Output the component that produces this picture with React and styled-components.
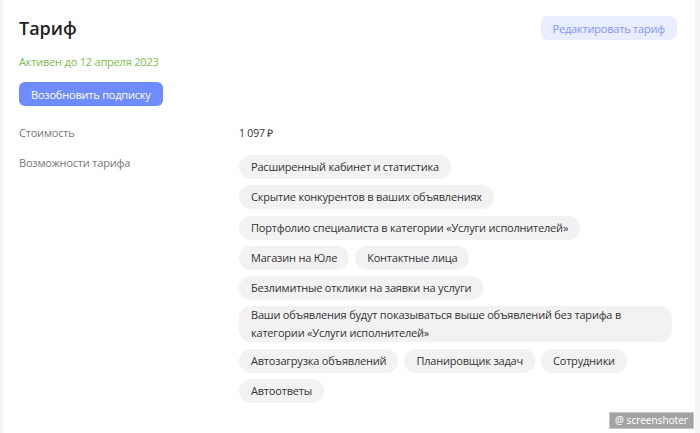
import React from 'react'
import styled, { createGlobalStyle } from 'styled-components'

const GlobalStyle = createGlobalStyle`
  html, body {
    margin: 0;
    padding: 0;
    background: #f4f4f6;
    font-family: "Open Sans", "Liberation Sans", sans-serif;
  }
`

const Page = styled.div`
  display: flex;
  width: 700px;
  height: 433px;
  padding-left: 3px;
  padding-right: 5px;
  box-sizing: border-box;
  position: relative;
  overflow: hidden;
`

const Card = styled.div`
  flex: 1;
  background: #fff;
  padding: 15px 18px 0 16px;
  display: flex;
  flex-direction: column;
`

const Header = styled.div`
  display: flex;
  justify-content: space-between;
  align-items: flex-start;
`

const Title = styled.h1`
  margin: 0;
  font-size: 18px;
  line-height: 26px;
  font-weight: 600;
  color: #222;
`

const EditButton = styled.button`
  border: none;
  background: #e8edff;
  color: #8596ff;
  font-family: inherit;
  font-size: 11px;
  letter-spacing: -0.2px;
  height: 24px;
  padding: 0 12px;
  border-radius: 7px;
  margin-top: 1px;
`

const Active = styled.div`
  margin-top: 13px;
  font-size: 11px;
  letter-spacing: -0.2px;
  line-height: 16px;
  color: #7cbb4b;
`

const RenewButton = styled.button`
  align-self: flex-start;
  margin-top: 12px;
  border: none;
  background: #6e8cff;
  color: #fff;
  font-family: inherit;
  font-size: 11px;
  letter-spacing: -0.2px;
  height: 24px;
  padding: 0 12px;
  border-radius: 6px;
`

const Row = styled.div`
  display: grid;
  grid-template-columns: 220px 433px;
  margin-top: ${p => p.gap}px;
`

const Label = styled.div`
  font-size: 11px;
  letter-spacing: -0.2px;
  line-height: 16px;
  color: #777;
`

const Value = styled.div`
  font-size: 10.5px;
  letter-spacing: -0.2px;
  line-height: 16px;
  color: #333;
`

const Chips = styled.div`
  display: flex;
  flex-wrap: wrap;
  row-gap: 6.3px;
  column-gap: 6px;
  width: 433px;
  min-width: 0;
`

const Chip = styled.div`
  display: flex;
  align-items: center;
  min-height: 24px;
  max-width: 100%;
  box-sizing: border-box;
  padding: 0 12px;
  border-radius: 12px;
  background: #f2f2f2;
  color: #333;
  font-size: 11px;
  letter-spacing: -0.2px;
  line-height: 18px;
`

const Watermark = styled.div`
  position: absolute;
  right: 6px;
  bottom: 4px;
  background: #a3a3a3;
  color: #fff;
  font-size: 10px;
  line-height: 15px;
  padding: 0 5px;
  border: 1px solid #c4c4c4;
  font-family: "Noto Sans", sans-serif;
`

const features = [
  'Расширенный кабинет и статистика',
  'Скрытие конкурентов в ваших объявлениях',
  'Портфолио специалиста в категории «Услуги исполнителей»',
  'Магазин на Юле',
  'Контактные лица',
  'Безлимитные отклики на заявки на услуги',
  'Ваши объявления будут показываться выше объявлений без тарифа в категории «Услуги исполнителей»',
  'Автозагрузка объявлений',
  'Планировщик задач',
  'Сотрудники',
  'Автоответы',
]

export default function App() {
  return (
    <>
      <GlobalStyle />
      <Page>
        <Card>
          <Header>
            <Title>Тариф</Title>
            <EditButton>Редактировать тариф</EditButton>
          </Header>
          <Active>Активен до 12 апреля 2023</Active>
          <RenewButton>Возобновить подписку</RenewButton>
          <Row gap={19}>
            <Label>Стоимость</Label>
            <Value>1 097 ₽</Value>
          </Row>
          <Row gap={14}>
            <Label>Возможности тарифа</Label>
            <Chips>
              {features.map(f => (
                <Chip key={f}>{f}</Chip>
              ))}
            </Chips>
          </Row>
        </Card>
        <Watermark>@ screenshoter</Watermark>
      </Page>
    </>
  )
}
